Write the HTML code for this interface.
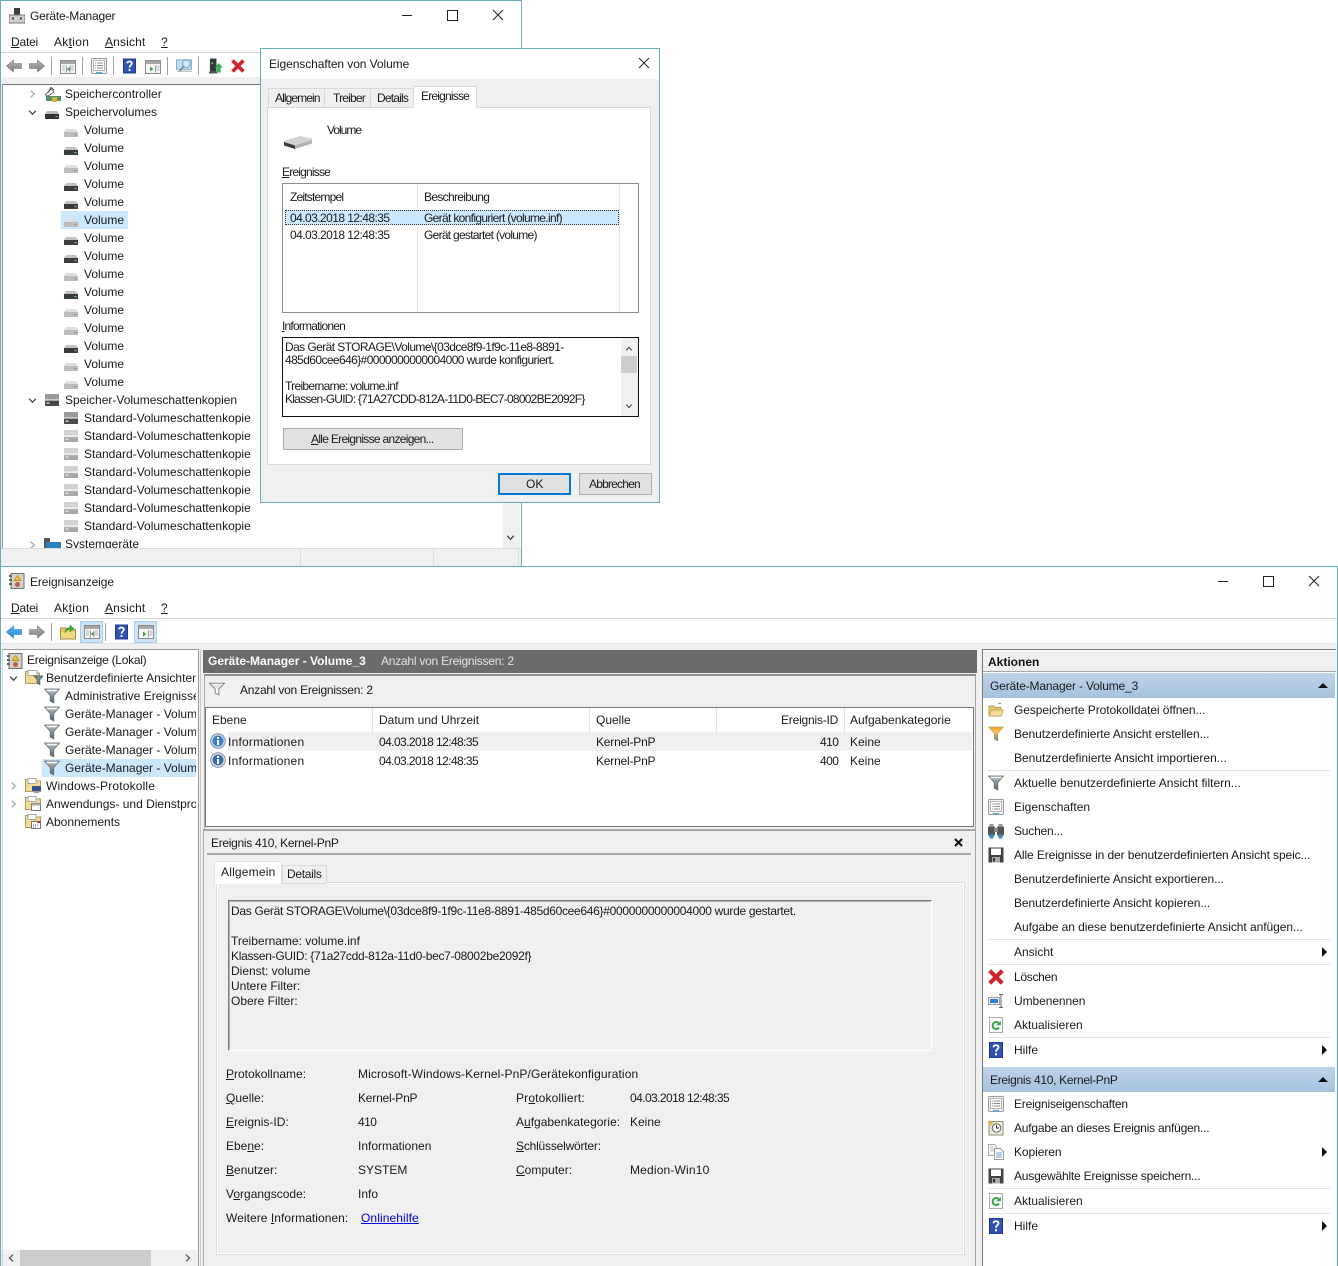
<!DOCTYPE html>
<html lang="de"><head><meta charset="utf-8"><title>Geräte-Manager und Ereignisanzeige</title>
<style>
html,body{margin:0;padding:0;background:#fff}
#r{position:relative;width:1338px;height:1266px;overflow:hidden;background:#fff;font:12px/14px "Liberation Sans",sans-serif;color:#1a1a1a}
#r div{position:absolute;box-sizing:border-box}
#r span,#r a{position:absolute;white-space:nowrap}
svg{position:absolute;overflow:visible}
.dlg span{letter-spacing:-.8px}
#r .d{letter-spacing:-.58px}
#r .a{letter-spacing:-.07px}
#r .b{letter-spacing:-.2px}
#r .c{letter-spacing:-.3px}
</style></head><body>
<svg width="0" height="0" style="position:absolute"><defs>
<linearGradient id="gg" x1="0" y1="0" x2="0" y2="1"><stop offset="0" stop-color="#b5b5b5"/><stop offset="1" stop-color="#7e7e7e"/></linearGradient>
<linearGradient id="gb" x1="0" y1="0" x2="0" y2="1"><stop offset="0" stop-color="#5cc1f0"/><stop offset="1" stop-color="#1c85cf"/></linearGradient>
<linearGradient id="fn" x1="0" y1="0" x2="0" y2="1"><stop offset="0" stop-color="#b8bec4"/><stop offset="1" stop-color="#59636b"/></linearGradient>
<linearGradient id="fo" x1="0" y1="0" x2="0" y2="1"><stop offset="0" stop-color="#f5a623"/><stop offset=".4" stop-color="#f6c15c"/><stop offset="1" stop-color="#6f7780"/></linearGradient>
<symbol id="back" viewBox="0 0 16 14"><path d="M.5 7 7.500 1V4.500H15.500V9.500H7.500V13Z" fill="url(#gg)" stroke="#777" stroke-width=".6"/></symbol>
<symbol id="fwd" viewBox="0 0 16 14"><path d="M15.500 7 8.500 1V4.500H.5V9.500H8.500V13Z" fill="url(#gg)" stroke="#777" stroke-width=".6"/></symbol>
<symbol id="backb" viewBox="0 0 16 14"><path d="M.5 7 7.500 1V4.500H15.500V9.500H7.500V13Z" fill="url(#gb)" stroke="#1a7fc4" stroke-width=".6"/></symbol>
<symbol id="pl" viewBox="0 0 16 14"><rect x=".5" y=".5" width="15" height="13" fill="#f7f7f7" stroke="#8b8b8b"/><rect x="1" y="1" width="14" height="3" fill="#a7a7a7"/><path d="M6.500 5.500V12.500M10 5.500V12.500" stroke="#999"/><path d="M9.500 7 6.800 9 9.500 11Z" fill="#3aa44d"/><path d="M2 6h3M2 8h3M2 10h3M11 6h3M11 8h3M11 10h3" stroke="#b5b5b5"/></symbol>
<symbol id="pr" viewBox="0 0 16 14"><rect x=".5" y=".5" width="15" height="13" fill="#f7f7f7" stroke="#8b8b8b"/><rect x="1" y="1" width="14" height="3" fill="#a7a7a7"/><path d="M10.500 5.500V12.500" stroke="#999"/><path d="M5 6.500 8.500 9 5 11.500Z" fill="#3aa44d"/><path d="M11.500 6h3M11.500 8h3M11.500 10h3" stroke="#b5b5b5"/></symbol>
<symbol id="prop" viewBox="0 0 16 16"><rect x=".5" y=".5" width="15" height="15" rx="1" fill="#f2f2f2" stroke="#9a9a9a"/><rect x="2.500" y="2.500" width="11" height="10" fill="#fff" stroke="#b5b5b5"/><path d="M4 5h1M6 5h6M4 7.500h1M6 7.500h6M4 10h1M6 10h6" stroke="#8a8a8a"/><path d="M5 14.800h6" stroke="#4aa4dd" stroke-width="1.400"/></symbol>
<symbol id="help" viewBox="0 0 14 16"><rect width="14" height="16" fill="#2f52b3"/><rect x=".5" y=".5" width="13" height="15" fill="none" stroke="#22398a"/><path d="M4.500 5.200C4.500 2.500 9.500 2.500 9.500 5.200 9.500 7.200 7 7.200 7 9.800" fill="none" stroke="#fff" stroke-width="1.900"/><rect x="6" y="11.300" width="2" height="2" fill="#fff"/></symbol>
<symbol id="mon" viewBox="0 0 18 16"><rect x=".5" y="1.500" width="16" height="10" fill="#bcdcf2" stroke="#8fa6b8"/><circle cx="11" cy="5.500" r="4" fill="#d5ecfa" stroke="#5f9fc9"/><path d="M8 8.500 3.500 14" stroke="#666" stroke-width="1.300"/><path d="M1 13.500H17" stroke="#9aa"/></symbol>
<symbol id="upd" viewBox="0 0 15 16"><rect x="1" y="0" width="7" height="14" fill="#33383a"/><rect x="2.500" y="4" width="2" height="2" fill="#4fc04f"/><path d="M0 14H9V16H0Z" fill="#555"/><path d="M10.500 5 15 9.500H12.500V15H8.500V9.500H6Z" fill="#2fb24f"/></symbol>
<symbol id="red" viewBox="0 0 15 15"><path d="M3 .5 7.500 5 12 .5 14.500 3 10 7.500 14.500 12 12 14.500 7.500 10 3 14.500 .5 12 5 7.500 .5 3Z" fill="#d4222a" stroke="#a9141b" stroke-width=".4"/></symbol>
<symbol id="devm" viewBox="0 0 16 16"><rect x="5" y="0" width="6" height="8" fill="#3b3b3b"/><rect x="0" y="7" width="16" height="8" fill="#cfcfcf" stroke="#777"/><rect x="3" y="9.500" width="2" height="2" fill="#444"/><rect x="11" y="9.500" width="2" height="2" fill="#444"/></symbol>
<symbol id="evt" viewBox="0 0 16 16"><rect x="2" y=".5" width="13" height="15" fill="#d8d2bd" stroke="#6f6f7f"/><rect x="0" y="2" width="3" height="2" fill="#567"/><rect x="0" y="6" width="3" height="2" fill="#567"/><rect x="0" y="10" width="3" height="2" fill="#567"/><path d="M8.500 2.500 12 7.500H5Z" fill="#f2c531" stroke="#7a5c00" stroke-width=".5"/><circle cx="8.500" cy="11.500" r="2.500" fill="#c25a5a"/></symbol>
<symbol id="dd" viewBox="0 0 14 8"><path d="M2 0H12L14 3H0Z" fill="#c2c2c2"/><rect y="3" width="14" height="5" fill="#3c3c3c"/><rect x="10.500" y="5" width="2" height="1.200" fill="#62d36b"/></symbol>
<symbol id="dl" viewBox="0 0 14 8"><path d="M2 0H12L14 3H0Z" fill="#dedede"/><rect y="3" width="14" height="5" fill="#bdbdbd"/><rect x="10.500" y="5" width="2" height="1.200" fill="#8a8a8a"/></symbol>
<symbol id="ds" viewBox="0 0 14 12"><rect y="0" width="14" height="5.500" fill="#d2d2d2"/><rect y="6.500" width="14" height="5.500" fill="#a8a8a8"/><rect y="6.500" width="14" height=".7" fill="#dcdcdc"/><rect x="1.500" y="8.500" width="3" height="1.200" fill="#eee"/></symbol>
<symbol id="dsd" viewBox="0 0 14 12"><rect y="0" width="14" height="5.500" fill="#9a9a9a"/><rect y="6.500" width="14" height="5.500" fill="#4a4a4a"/><rect x="1.500" y="8.500" width="3" height="1.200" fill="#dfe"/></symbol>
<symbol id="ctl" viewBox="0 0 16 16"><path d="M0 8 6 2 9 5 4 8.500Z" fill="#fff" stroke="#555" stroke-width=".8"/><path d="M3 5.500 6 .5 9 3" fill="none" stroke="#444"/><rect x="1" y="9" width="15" height="5" fill="#55906a"/><rect x="7" y="10" width="5" height="5" fill="#d8b238"/></symbol>
<symbol id="vgh" viewBox="0 0 14 8"><path d="M2 0H12L14 3H0Z" fill="#bcbcbc"/><rect y="3" width="14" height="5" fill="#333"/><rect x="10.500" y="5" width="2" height="1.200" fill="#62d36b"/></symbol>
<symbol id="sys" viewBox="0 0 17 15"><rect x="0" y="0" width="6" height="12" fill="#555"/><rect x="2" y="4" width="15" height="9" fill="#2d7fc4"/></symbol>
<symbol id="fu" viewBox="0 0 16 16"><path d="M.5 1H15.500L9.800 7.500V15L6.200 13V7.500Z" fill="url(#fn)" stroke="#5f6a72" stroke-width=".7"/><path d="M2.300 1.800H13.700L12.600 3.200H3.500Z" fill="#fff"/></symbol>
<symbol id="fuw" viewBox="0 0 18 15"><path d="M.5 1H17.500L11 7.500V14L7 12V7.500Z" fill="#fff" stroke="#777"/><path d="M3 2.500H15L10.500 7H7.500Z" fill="#e2e2e2"/></symbol>
<symbol id="fuo" viewBox="0 0 16 16"><path d="M.5 1H15.500L9.800 7.500V15L6.200 13V7.500Z" fill="url(#fo)" stroke="#8a8a6a" stroke-width=".5"/></symbol>
<symbol id="folf" viewBox="0 0 18 16"><path d="M.5 14.500V2.500H6L7.500 4H14.500V14.500Z" fill="#f3dc92" stroke="#b2986a"/><rect x="3" y="1.500" width="9" height="5" fill="#fff" stroke="#aaa"/><path d="M9 7H18L14.800 10.500V15.500L12.200 14V10.500Z" fill="#7f8b95" stroke="#566"/></symbol>
<symbol id="folw" viewBox="0 0 16 16"><path d="M.5 14.500V2.500H6L7.500 4H15.500V14.500Z" fill="#f3dc92" stroke="#b2986a"/><rect x="3" y="1.500" width="8" height="5" fill="#fff" stroke="#aaa"/><rect x="7" y="9" width="9" height="5" fill="#31528e"/><rect x="9" y="14" width="5" height="2" fill="#999"/></symbol>
<symbol id="fola" viewBox="0 0 16 16"><path d="M.5 14.500V2.500H6L7.500 4H15.500V14.500Z" fill="#f3dc92" stroke="#b2986a"/><rect x="3" y="1.500" width="8" height="5" fill="#fff" stroke="#aaa"/><rect x="6.500" y="8.500" width="9" height="7" fill="#fff" stroke="#777"/><rect x="6.500" y="8.500" width="9" height="2" fill="#aaa"/></symbol>
<symbol id="folb" viewBox="0 0 16 16"><path d="M.5 14.500V2.500H6L7.500 4H15.500V14.500Z" fill="#f3dc92" stroke="#b2986a"/><rect x="3" y="1.500" width="8" height="5" fill="#fff" stroke="#aaa"/><rect x="6.500" y="8.500" width="9" height="7" fill="#fff" stroke="#777"/><path d="M8 12h1M10 12h1M12 12h1M8 14h1M10 14h1" stroke="#46a"/><rect x="12" y="8" width="3" height="2" fill="#d33"/></symbol>
<symbol id="folu" viewBox="0 0 16 16"><path d="M.5 15V4H6L7.500 5.500H15.500V15Z" fill="#e5c85f" stroke="#a58c3f"/><path d="M1 8H15V14.500H1Z" fill="#f3d97e"/><path d="M5 9C5 5 7 3.500 10 3.500V1L14 4.500 10 8V5.500C8 5.500 6.500 6.500 5 9Z" fill="#3fae4a" stroke="#237a2d" stroke-width=".4"/></symbol>
<symbol id="open" viewBox="0 0 16 16"><path d="M1 4H6L7 5.500H13V14H1Z" fill="#e8c86c" stroke="#a58c3f" stroke-width=".7"/><path d="M3.500 8H15.500L13 14H1Z" fill="#f4dd98" stroke="#b79f55" stroke-width=".7"/><path d="M10 1.500h3" stroke="#6ab56a"/></symbol>
<symbol id="bin" viewBox="0 0 16 16"><rect x="0" y="3" width="7" height="10" rx="2" fill="#555"/><rect x="9" y="3" width="7" height="10" rx="2" fill="#555"/><rect x="6" y="5" width="4" height="4" fill="#888"/><rect x="1.500" y="1" width="4" height="3" fill="#999"/><rect x="10.500" y="1" width="4" height="3" fill="#999"/><circle cx="3.500" cy="13.500" r="2.300" fill="#3d8fc9"/><circle cx="12.500" cy="13.500" r="2.300" fill="#3d8fc9"/></symbol>
<symbol id="sav" viewBox="0 0 16 16"><path d="M.5.500H15.500V15.500H.5Z" fill="#3f4347"/><rect x="3" y="1.500" width="10" height="6.500" fill="#fff"/><rect x="4" y="10" width="8" height="5.500" fill="#a9a9a9"/><rect x="5" y="11" width="2" height="3.500" fill="#333"/></symbol>
<symbol id="ren" viewBox="0 0 16 14"><rect x=".5" y="3.500" width="11" height="7" fill="#eef" stroke="#999"/><rect x="2" y="5" width="8" height="4" fill="#2f7fd4"/><path d="M11 .5H15M13 .5V13.500M11 13.500H15" stroke="#666" fill="none"/></symbol>
<symbol id="rf" viewBox="0 0 16 16"><rect x=".5" y=".5" width="13" height="15" fill="#f8f8f8" stroke="#aaa"/><path d="M10 6.500A3.500 3.500 0 1 0 10 10.500" fill="none" stroke="#36a94a" stroke-width="2"/><path d="M11.800 3.800V8.300H7.300Z" fill="#36a94a"/></symbol>
<symbol id="task" viewBox="0 0 16 16"><rect x="1" y="1.500" width="14" height="13.500" fill="#efe9d6" stroke="#8d8d80"/><circle cx="8.500" cy="8" r="4.300" fill="#fff" stroke="#666"/><path d="M8.500 5V8H11" fill="none" stroke="#333"/><path d="M3 0 4 2 6 3 4 4 3 6 2 4 0 3 2 2Z" fill="#f3b52c"/></symbol>
<symbol id="cop" viewBox="0 0 16 16"><path d="M.5.500H6.500L8.500 2.500V11.500H.5Z" fill="#f8f8f8" stroke="#aaa"/><path d="M6.500 4.500H12.500L15.500 7.500V15.500H6.500Z" fill="#fff" stroke="#999"/><path d="M8 9h6M8 11h6M8 13h6" stroke="#6a9fd0"/><path d="M2 3h3M2 5h4M2 7h4" stroke="#bbb"/></symbol>
<symbol id="inf" viewBox="0 0 16 16"><circle cx="8" cy="8" r="7.300" fill="#cfe0f3" stroke="#7c8da4"/><circle cx="8" cy="8" r="5.500" fill="#3e7fc8"/><rect x="7" y="7" width="2" height="5" fill="#fff"/><rect x="7" y="4" width="2" height="2" fill="#fff"/></symbol>
<symbol id="ina" viewBox="0 0 16 16"><circle cx="8" cy="8" r="7.300" fill="#ececec" stroke="#7c8da4"/><circle cx="8" cy="8" r="5.500" fill="#3c6eb0"/><rect x="7" y="7" width="2" height="5" fill="#fff"/><rect x="7" y="4" width="2" height="2" fill="#fff"/></symbol>
<symbol id="ch" viewBox="0 0 8 6"><path d="M.7 .7 4 4.300 7.300 .7" fill="none" stroke="#444" stroke-width="1.300"/></symbol>
<symbol id="cr" viewBox="0 0 6 8"><path d="M.7 .7 4.300 4 .7 7.300" fill="none" stroke="#a6a6a6" stroke-width="1.300"/></symbol>
</defs></svg>

<div id="r">

<!-- WINDOW 1 -->
<div style="left:0;top:0;width:522px;height:567px;background:#fff;border:1px solid #67adba;overflow:hidden"></div>
<svg style="left:9px;top:8px" width="16" height="16"><use href="#devm"/></svg>
<span class="b" style="left:30px;top:9px">Geräte-Manager</span>
<svg style="left:402px;top:10px" width="110" height="12"><path d="M0 5.500H10M45.500 .500H55.500V10.500H45.500ZM91 0 101 10M101 0 91 10" fill="none" stroke="#222"/></svg>
<span style="left:11px;top:35px;letter-spacing:-.2px"><u>D</u>atei</span><span style="left:54px;top:35px;letter-spacing:.3px">Ak<u>t</u>ion</span><span style="left:105px;top:35px;letter-spacing:.15px"><u>A</u>nsicht</span><span style="left:161px;top:35px"><u>?</u></span>
<div style="left:1px;top:52px;width:520px;height:1px;background:#d5d5d5"></div>
<svg style="left:6px;top:59px" width="16" height="14"><use href="#back"/></svg>
<svg style="left:29px;top:59px" width="16" height="14"><use href="#fwd"/></svg>
<div style="left:51px;top:57px;width:1px;height:18px;background:#a0a0a0"></div>
<svg style="left:60px;top:60px" width="16" height="14"><use href="#pl"/></svg>
<div style="left:82px;top:57px;width:1px;height:18px;background:#a0a0a0"></div>
<svg style="left:91px;top:58px" width="16" height="16"><use href="#prop"/></svg>
<div style="left:113px;top:57px;width:1px;height:18px;background:#a0a0a0"></div>
<svg style="left:123px;top:58px" width="13" height="16"><use href="#help"/></svg>
<svg style="left:145px;top:60px" width="16" height="14"><use href="#pr"/></svg>
<div style="left:167px;top:57px;width:1px;height:18px;background:#a0a0a0"></div>
<svg style="left:176px;top:58px" width="17" height="16"><use href="#mon"/></svg>
<div style="left:198px;top:57px;width:1px;height:18px;background:#a0a0a0"></div>
<svg style="left:209px;top:58px" width="14" height="16"><use href="#upd"/></svg>
<svg style="left:231px;top:59px" width="14" height="14"><use href="#red"/></svg>
<div style="left:1px;top:77px;width:520px;height:7px;background:#f0f0f0"></div>
<div style="left:1px;top:84px;width:2px;height:464px;background:#f0f0f0"></div>
<div style="left:2px;top:84px;width:519px;height:1px;background:#777"></div>
<div style="left:2px;top:84px;width:1px;height:464px;background:#999"></div>
<div style="left:503px;top:85px;width:17px;height:463px;background:#f0f0f0"></div>
<svg style="left:506px;top:535px" width="9" height="6"><use href="#ch"/></svg>

<div style="left:61px;top:211px;width:67px;height:18px;background:#cce8ff"></div>
<svg style="left:30px;top:90px" width="6" height="8"><use href="#cr"/></svg>
<svg style="left:45px;top:87px" width="16" height="16"><use href="#ctl"/></svg><span style="left:65px;top:87px">Speichercontroller</span>
<svg style="left:28px;top:110px" width="9" height="6"><use href="#ch"/></svg>
<svg style="left:45px;top:111px" width="14" height="8"><use href="#vgh"/></svg><span style="left:65px;top:105px">Speichervolumes</span>
<svg style="left:64px;top:129px" width="14" height="8"><use href="#dl"/></svg><span style="left:84px;top:123px">Volume</span>
<svg style="left:64px;top:147px" width="14" height="8"><use href="#dd"/></svg><span style="left:84px;top:141px">Volume</span>
<svg style="left:64px;top:165px" width="14" height="8"><use href="#dl"/></svg><span style="left:84px;top:159px">Volume</span>
<svg style="left:64px;top:183px" width="14" height="8"><use href="#dd"/></svg><span style="left:84px;top:177px">Volume</span>
<svg style="left:64px;top:201px" width="14" height="8"><use href="#dd"/></svg><span style="left:84px;top:195px">Volume</span>
<svg style="left:64px;top:219px" width="14" height="8"><use href="#dl"/></svg><span style="left:84px;top:213px">Volume</span>
<svg style="left:64px;top:237px" width="14" height="8"><use href="#dd"/></svg><span style="left:84px;top:231px">Volume</span>
<svg style="left:64px;top:255px" width="14" height="8"><use href="#dd"/></svg><span style="left:84px;top:249px">Volume</span>
<svg style="left:64px;top:273px" width="14" height="8"><use href="#dl"/></svg><span style="left:84px;top:267px">Volume</span>
<svg style="left:64px;top:291px" width="14" height="8"><use href="#dd"/></svg><span style="left:84px;top:285px">Volume</span>
<svg style="left:64px;top:309px" width="14" height="8"><use href="#dl"/></svg><span style="left:84px;top:303px">Volume</span>
<svg style="left:64px;top:327px" width="14" height="8"><use href="#dl"/></svg><span style="left:84px;top:321px">Volume</span>
<svg style="left:64px;top:345px" width="14" height="8"><use href="#dd"/></svg><span style="left:84px;top:339px">Volume</span>
<svg style="left:64px;top:363px" width="14" height="8"><use href="#dl"/></svg><span style="left:84px;top:357px">Volume</span>
<svg style="left:64px;top:381px" width="14" height="8"><use href="#dl"/></svg><span style="left:84px;top:375px">Volume</span>
<svg style="left:28px;top:398px" width="9" height="6"><use href="#ch"/></svg>
<svg style="left:45px;top:394px" width="14" height="12"><use href="#dsd"/></svg><span style="left:65px;top:393px">Speicher-Volumeschattenkopien</span>
<svg style="left:64px;top:412px" width="14" height="12"><use href="#dsd"/></svg><span style="left:84px;top:411px">Standard-Volumeschattenkopie</span>
<svg style="left:64px;top:430px" width="14" height="12"><use href="#ds"/></svg><span style="left:84px;top:429px">Standard-Volumeschattenkopie</span>
<svg style="left:64px;top:448px" width="14" height="12"><use href="#ds"/></svg><span style="left:84px;top:447px">Standard-Volumeschattenkopie</span>
<svg style="left:64px;top:466px" width="14" height="12"><use href="#ds"/></svg><span style="left:84px;top:465px">Standard-Volumeschattenkopie</span>
<svg style="left:64px;top:484px" width="14" height="12"><use href="#ds"/></svg><span style="left:84px;top:483px">Standard-Volumeschattenkopie</span>
<svg style="left:64px;top:502px" width="14" height="12"><use href="#ds"/></svg><span style="left:84px;top:501px">Standard-Volumeschattenkopie</span>
<svg style="left:64px;top:520px" width="14" height="12"><use href="#ds"/></svg><span style="left:84px;top:519px">Standard-Volumeschattenkopie</span>
<svg style="left:30px;top:541px" width="6" height="8"><use href="#cr"/></svg>
<svg style="left:44px;top:538px" width="17" height="15"><use href="#sys"/></svg><span style="left:65px;top:537px">Systemgeräte</span>
<div style="left:1px;top:548px;width:520px;height:18px;background:#f0f0f0;border-top:1px solid #dcdcdc"></div>
<div style="left:300px;top:549px;width:1px;height:17px;background:#dcdcdc"></div>
<div style="left:433px;top:549px;width:1px;height:17px;background:#dcdcdc"></div>
<div style="left:518px;top:549px;width:1px;height:17px;background:#dcdcdc"></div>

<!-- DIALOG -->
<div style="left:260px;top:48px;width:400px;height:455px;background:#f0f0f0;border:1px solid #67adba"></div>
<div style="left:261px;top:49px;width:398px;height:30px;background:#fff"></div>
<span style="left:269px;top:57px;letter-spacing:-.08px">Eigenschaften von Volume</span>
<svg style="left:639px;top:58px" width="10" height="10"><path d="M0 0 10 10M10 0 0 10" stroke="#222"/></svg>
<div style="left:267px;top:107px;width:384px;height:358px;background:#fff;border:1px solid #d9d9d9"></div>
<div style="left:268px;top:88px;width:57px;height:20px;background:#f0f0f0;border:1px solid #d9d9d9"></div>
<div style="left:325px;top:88px;width:46px;height:20px;background:#f0f0f0;border:1px solid #d9d9d9;border-left:0"></div>
<div style="left:371px;top:88px;width:43px;height:20px;background:#f0f0f0;border:1px solid #d9d9d9;border-left:0"></div>
<div style="left:413px;top:86px;width:64px;height:22px;background:#fff;border:1px solid #d9d9d9;border-bottom:0"></div>
<div class="dlg">
<span style="left:275px;top:91px;letter-spacing:-.9px">Allgemein</span><span style="left:333px;top:91px">Treiber</span><span style="left:377px;top:91px">Details</span><span style="left:421px;top:89px">Ereignisse</span>
<span style="left:327px;top:123px;letter-spacing:-1px">Volume</span>
<span style="left:282px;top:165px"><u>E</u>reignisse</span>
<span style="left:282px;top:319px"><u>I</u>nformationen</span>
</div>
<svg style="left:283px;top:133px" width="30" height="18"><path d="M1 8 17 3 29 5.500 29 10 12 16 1 12Z" fill="#d4d4d4"/><path d="M1 9 12 12.500V16L1 12.500Z" fill="#3d3d3d"/><path d="M12 12.500 29 7V10.500L12 16Z" fill="#b3b3b3"/></svg>
<div style="left:282px;top:183px;width:357px;height:130px;background:#fff;border:1px solid #8d8d8d"></div>
<div style="left:417px;top:184px;width:1px;height:128px;background:#e8e8e8"></div>
<div style="left:619px;top:184px;width:1px;height:128px;background:#e8e8e8"></div>
<div style="left:285px;top:210px;width:334px;height:15px;background:#cce8ff;border:1px dotted #333"></div>
<div class="dlg">
<span style="left:290px;top:190px">Zeitstempel</span><span style="left:424px;top:190px;letter-spacing:-.68px">Beschreibung</span>
<span style="left:290px;top:211px;letter-spacing:-.56px">04.03.2018 12:48:35</span><span style="left:424px;top:211px;letter-spacing:-.67px">Gerät konfiguriert (volume.inf)</span>
<span style="left:290px;top:228px;letter-spacing:-.56px">04.03.2018 12:48:35</span><span style="left:424px;top:228px;letter-spacing:-.72px">Gerät gestartet (volume)</span>
</div>
<div style="left:282px;top:337px;width:357px;height:80px;background:#fff;border:1px solid #111"></div>
<div style="left:621px;top:338px;width:17px;height:78px;background:#f0f0f0"></div>
<div style="left:621px;top:356px;width:16px;height:17px;background:#cdcdcd"></div>
<svg style="left:625px;top:346px" width="8" height="5"><g transform="matrix(1 0 0 -1 0 5)"><use href="#ch" width="8" height="5"/></g></svg>
<svg style="left:625px;top:404px" width="8" height="5"><use href="#ch" width="8" height="5"/></svg>
<div class="dlg">
<span style="left:285px;top:340px;letter-spacing:-.58px">Das Gerät STORAGE\Volume\{03dce8f9-1f9c-11e8-8891-</span>
<span style="left:285px;top:353px;letter-spacing:-.6px">485d60cee646}#0000000000004000 wurde konfiguriert.</span>
<span style="left:285px;top:379px;letter-spacing:-.7px">Treibername: volume.inf</span>
<span style="left:285px;top:392px;letter-spacing:-.75px">Klassen-GUID: {71A27CDD-812A-11D0-BEC7-08002BE2092F}</span>
</div>
<div style="left:283px;top:428px;width:180px;height:22px;background:#e1e1e1;border:1px solid #adadad"></div>
<div style="left:498px;top:473px;width:73px;height:22px;background:#e1e1e1;border:2px solid #0078d7"></div>
<div style="left:579px;top:473px;width:73px;height:22px;background:#e1e1e1;border:1px solid #adadad"></div>
<div class="dlg">
<span style="left:311px;top:432px;letter-spacing:-.7px"><u>A</u>lle Ereignisse anzeigen...</span>
<span style="left:526px;top:477px;letter-spacing:0">OK</span>
<span style="left:589px;top:477px">Abbrechen</span>
</div>

<!-- WINDOW 2 -->
<div style="left:0;top:566px;width:1338px;height:700px;background:#fff;border:1px solid #67adba;border-bottom:0"></div>
<svg style="left:9px;top:573px" width="16" height="16"><use href="#evt"/></svg>
<span style="left:30px;top:575px;letter-spacing:-.1px">Ereignisanzeige</span>
<svg style="left:1218px;top:576px" width="110" height="12"><path d="M0 5.500H10M45.500 .500H55.500V10.500H45.500ZM91 0 101 10M101 0 91 10" fill="none" stroke="#222"/></svg>
<span style="left:11px;top:601px;letter-spacing:-.2px"><u>D</u>atei</span><span style="left:54px;top:601px;letter-spacing:.3px">Ak<u>t</u>ion</span><span style="left:105px;top:601px;letter-spacing:.15px"><u>A</u>nsicht</span><span style="left:161px;top:601px"><u>?</u></span>
<div style="left:1px;top:618px;width:1336px;height:1px;background:#d5d5d5"></div>
<svg style="left:6px;top:625px" width="16" height="14"><use href="#backb"/></svg>
<svg style="left:29px;top:625px" width="16" height="14"><use href="#fwd"/></svg>
<div style="left:51px;top:623px;width:1px;height:18px;background:#a0a0a0"></div>
<svg style="left:60px;top:624px" width="16" height="16"><use href="#folu"/></svg>
<div style="left:80px;top:621px;width:23px;height:22px;background:#cce4f7;border:1px solid #a6cfee"></div>
<svg style="left:84px;top:625px" width="16" height="14"><use href="#pl"/></svg>
<div style="left:105px;top:623px;width:1px;height:18px;background:#a0a0a0"></div>
<svg style="left:115px;top:624px" width="13" height="16"><use href="#help"/></svg>
<div style="left:134px;top:621px;width:23px;height:22px;background:#cce4f7;border:1px solid #a6cfee"></div>
<svg style="left:138px;top:625px" width="16" height="14"><use href="#pr"/></svg>
<div style="left:1px;top:643px;width:1336px;height:623px;background:#f0f0f0;border-top:1px solid #e3e3e3"></div>

<!-- left tree -->
<div style="left:2px;top:649px;width:197px;height:617px;background:#fff;border:1px solid #9a9a9a;border-left-color:#d8d8d8;border-bottom:0;overflow:hidden">
<div style="left:39px;top:109px;width:155px;height:18px;background:#cce8ff"></div>
<svg style="left:4px;top:3px" width="16" height="16"><use href="#evt"/></svg><span style="left:24px;top:3px;letter-spacing:-.26px">Ereignisanzeige (Lokal)</span>
<svg style="left:6px;top:26px" width="9" height="6"><use href="#ch"/></svg>
<svg style="left:22px;top:19px" width="18" height="16"><use href="#folf"/></svg><span style="left:43px;top:21px">Benutzerdefinierte Ansichten</span>
<svg style="left:41px;top:38px" width="16" height="16"><use href="#fu"/></svg><span style="left:62px;top:39px">Administrative Ereignisse</span>
<svg style="left:41px;top:56px" width="16" height="16"><use href="#fu"/></svg><span style="left:62px;top:57px">Geräte-Manager - Volume_0</span>
<svg style="left:41px;top:74px" width="16" height="16"><use href="#fu"/></svg><span style="left:62px;top:75px">Geräte-Manager - Volume_1</span>
<svg style="left:41px;top:92px" width="16" height="16"><use href="#fu"/></svg><span style="left:62px;top:93px">Geräte-Manager - Volume_2</span>
<svg style="left:41px;top:110px" width="16" height="16"><use href="#fu"/></svg><span style="left:62px;top:111px">Geräte-Manager - Volume_3</span>
<svg style="left:8px;top:132px" width="6" height="8"><use href="#cr"/></svg>
<svg style="left:22px;top:127px" width="16" height="16"><use href="#folw"/></svg><span style="left:43px;top:129px;letter-spacing:.17px">Windows-Protokolle</span>
<svg style="left:8px;top:150px" width="6" height="8"><use href="#cr"/></svg>
<svg style="left:22px;top:145px" width="16" height="16"><use href="#fola"/></svg><span style="left:43px;top:147px">Anwendungs- und Dienstprotokolle</span>
<svg style="left:22px;top:163px" width="16" height="16"><use href="#folb"/></svg><span style="left:43px;top:165px">Abonnements</span>
<div style="left:193px;top:0;width:3px;height:600px;background:#fff"></div>
<div style="left:0;top:600px;width:195px;height:16px;background:#f0f0f0"></div>
<div style="left:17px;top:600px;width:131px;height:16px;background:#cdcdcd"></div>
<svg style="left:5px;top:604px" width="6" height="8"><g stroke="#555" stroke-width="1.300" fill="none"><path d="M5 .7 1.500 4 5 7.300"/></g></svg>
<svg style="left:182px;top:604px" width="6" height="8"><g stroke="#555" stroke-width="1.300" fill="none"><path d="M1 .7 4.500 4 1 7.300"/></g></svg>
</div>
<div style="left:200px;top:650px;width:1px;height:616px;background:#c8c8c8"></div>

<!-- center -->
<div style="left:203px;top:650px;width:774px;height:23px;background:#6b6b6b"></div>
<span style="left:208px;top:654px;color:#fff;font-weight:bold">Geräte-Manager - Volume_3</span>
<span style="left:381px;top:654px;color:#e4e4e4;letter-spacing:-.24px">Anzahl von Ereignissen: 2</span>
<div style="left:204px;top:674px;width:772px;height:592px;border:1px solid #a6a6a6;border-bottom:0"></div>
<div style="left:204px;top:674px;width:772px;height:2px;background:#8f8f8f"></div>
<svg style="left:209px;top:682px" width="16" height="14"><use href="#fuw"/></svg>
<span style="left:240px;top:683px;letter-spacing:-.24px">Anzahl von Ereignissen: 2</span>
<div style="left:205px;top:707px;width:769px;height:120px;background:#fff;border:1px solid #787878"></div>
<div style="left:228px;top:732px;width:744px;height:19px;background:#f0f0f0"></div>
<div style="left:372px;top:708px;width:1px;height:24px;background:#e5e5e5"></div>
<div style="left:589px;top:708px;width:1px;height:24px;background:#e5e5e5"></div>
<div style="left:716px;top:708px;width:1px;height:24px;background:#e5e5e5"></div>
<div style="left:844px;top:708px;width:1px;height:24px;background:#e5e5e5"></div>
<span style="left:212px;top:713px">Ebene</span><span style="left:379px;top:713px">Datum und Uhrzeit</span><span style="left:596px;top:713px">Quelle</span><span class="b" style="left:781px;top:713px">Ereignis-ID</span><span style="left:850px;top:713px">Aufgabenkategorie</span>
<svg style="left:210px;top:733px" width="16" height="16"><use href="#inf"/></svg>
<svg style="left:210px;top:752px" width="16" height="16"><use href="#ina"/></svg>
<span style="left:228px;top:735px;letter-spacing:.23px">Informationen</span><span class="d" style="left:379px;top:735px">04.03.2018 12:48:35</span><span class="b" style="left:596px;top:735px">Kernel-PnP</span><span class="d" style="left:820px;top:735px">410</span><span style="left:850px;top:735px">Keine</span>
<span style="left:228px;top:754px;letter-spacing:.23px">Informationen</span><span class="d" style="left:379px;top:754px">04.03.2018 12:48:35</span><span class="b" style="left:596px;top:754px">Kernel-PnP</span><span class="d" style="left:820px;top:754px">400</span><span style="left:850px;top:754px">Keine</span>

<div style="left:203px;top:829px;width:773px;height:437px;background:#f0f0f0;border:1px solid #a6a6a6;border-top:2px solid #a6a6a6;border-bottom:0"></div>
<span class="c" style="left:211px;top:836px">Ereignis 410, Kernel-PnP</span>
<svg style="left:954px;top:838px" width="9" height="9"><path d="M1 1 8 8M8 1 1 8" stroke="#111" stroke-width="2"/></svg>
<div style="left:207px;top:853px;width:764px;height:2px;background:#a9a9a9"></div>
<div style="left:217px;top:883px;width:747px;height:371px;background:#f0f0f0;border:1px solid #fff;outline:1px solid #dfdfdf"></div>
<div style="left:282px;top:865px;width:45px;height:19px;background:#f0f0f0;border:1px solid #d9d9d9"></div>
<div style="left:214px;top:861px;width:68px;height:23px;background:#fff;border:1px solid #e3e3e3;border-bottom:0"></div>
<span style="left:221px;top:865px;letter-spacing:.2px">Allgemein</span><span class="c" style="left:287px;top:867px">Details</span>
<div style="left:228px;top:900px;width:704px;height:151px;border-top:1px solid #7d7d7d;border-left:1px solid #7d7d7d;border-right:1px solid #fff;border-bottom:1px solid #fff;box-shadow:inset 1px 1px 0 #b4b4b4"></div>
<span class="c" style="left:231px;top:904px">Das Gerät STORAGE\Volume\{03dce8f9-1f9c-11e8-8891-485d60cee646}#0000000000004000 wurde gestartet.</span>
<span style="left:231px;top:934px">Treibername: volume.inf</span>
<span style="left:231px;top:949px;letter-spacing:-.29px">Klassen-GUID: {71a27cdd-812a-11d0-bec7-08002be2092f}</span>
<span style="left:231px;top:964px">Dienst: volume</span>
<span style="left:231px;top:979px">Untere Filter:</span>
<span style="left:231px;top:994px">Obere Filter:</span>
<span style="left:226px;top:1067px"><u>P</u>rotokollname:</span><span style="left:358px;top:1067px;letter-spacing:.1px">Microsoft-Windows-Kernel-PnP/Gerätekonfiguration</span>
<span style="left:226px;top:1091px"><u>Q</u>uelle:</span><span class="b" style="left:358px;top:1091px">Kernel-PnP</span><span style="left:516px;top:1091px;letter-spacing:.15px">Pr<u>o</u>tokolliert:</span><span class="d" style="left:630px;top:1091px">04.03.2018 12:48:35</span>
<span style="left:226px;top:1115px"><u>E</u>reignis-ID:</span><span class="d" style="left:358px;top:1115px">410</span><span style="left:516px;top:1115px"><span style="position:static">A<u>u</u>fgabenkategorie:</span></span><span style="left:630px;top:1115px">Keine</span>
<span style="left:226px;top:1139px">Ebe<u>n</u>e:</span><span style="left:358px;top:1139px">Informationen</span><span class="b" style="left:516px;top:1139px"><u>S</u>chlüsselwörter:</span>
<span style="left:226px;top:1163px"><u>B</u>enutzer:</span><span style="left:358px;top:1163px">SYSTEM</span><span style="left:516px;top:1163px"><u>C</u>omputer:</span><span style="left:630px;top:1163px;letter-spacing:.17px">Medion-Win10</span>
<span style="left:226px;top:1187px">V<u>o</u>rgangscode:</span><span style="left:358px;top:1187px">Info</span>
<span style="left:226px;top:1211px;letter-spacing:.05px">Weitere <u>I</u>nformationen:</span><span style="left:361px;top:1211px;color:#0000e0;text-decoration:underline;letter-spacing:.1px">Onlinehilfe</span>

<!-- right -->
<div style="left:982px;top:649px;width:354px;height:617px;background:#fff;border-left:1px solid #777;border-top:1px solid #777"></div>
<div style="left:983px;top:651px;width:353px;height:20px;background:#f0f0f0"></div>
<div style="left:983px;top:671px;width:353px;height:1px;background:#a6a6a6"></div>
<span style="left:988px;top:655px;font-weight:bold;color:#111">Aktionen</span>
<div style="left:983px;top:673px;width:352px;height:25px;background:linear-gradient(#bed3e8,#a6c2dd)"></div>
<span style="left:990px;top:679px;letter-spacing:-.16px">Geräte-Manager - Volume_3</span>
<svg style="left:1318px;top:683px" width="10" height="5"><path d="M5 0 10 5H0Z" fill="#111"/></svg>
<div style="left:983px;top:1067px;width:352px;height:25px;background:linear-gradient(#bed3e8,#a6c2dd)"></div>
<span class="c" style="left:990px;top:1073px">Ereignis 410, Kernel-PnP</span>
<svg style="left:1318px;top:1077px" width="10" height="5"><path d="M5 0 10 5H0Z" fill="#111"/></svg>
<div style="left:988px;top:770px;width:342px;height:1px;background:#e3e3e3"></div>
<div style="left:988px;top:939px;width:342px;height:1px;background:#e3e3e3"></div>
<div style="left:988px;top:964px;width:342px;height:1px;background:#e3e3e3"></div>
<div style="left:988px;top:1037px;width:342px;height:1px;background:#e3e3e3"></div>
<div style="left:988px;top:1188px;width:342px;height:1px;background:#e3e3e3"></div>
<div style="left:988px;top:1213px;width:342px;height:1px;background:#e3e3e3"></div>

<svg style="left:988px;top:702px" width="16" height="16"><use href="#open"/></svg><span class="a" style="left:1014px;top:703px">Gespeicherte Protokolldatei öffnen...</span>
<svg style="left:988px;top:726px" width="16" height="16"><use href="#fuo"/></svg><span class="a" style="left:1014px;top:727px">Benutzerdefinierte Ansicht erstellen...</span>
<span style="left:1014px;top:751px">Benutzerdefinierte Ansicht importieren...</span>
<svg style="left:988px;top:775px" width="16" height="16"><use href="#fu"/></svg><span style="left:1014px;top:776px">Aktuelle benutzerdefinierte Ansicht filtern...</span>
<svg style="left:988px;top:799px" width="16" height="16"><use href="#prop"/></svg><span style="left:1014px;top:800px">Eigenschaften</span>
<svg style="left:988px;top:823px" width="16" height="16"><use href="#bin"/></svg><span class="b" style="left:1014px;top:824px">Suchen...</span>
<svg style="left:988px;top:847px" width="16" height="16"><use href="#sav"/></svg><span style="left:1014px;top:848px;letter-spacing:-.1px">Alle Ereignisse in der benutzerdefinierten Ansicht speic...</span>
<span class="a" style="left:1014px;top:872px">Benutzerdefinierte Ansicht exportieren...</span>
<span class="a" style="left:1014px;top:896px">Benutzerdefinierte Ansicht kopieren...</span>
<span style="left:1014px;top:920px;letter-spacing:-.05px">Aufgabe an diese benutzerdefinierte Ansicht anfügen...</span>
<span style="left:1014px;top:945px">Ansicht</span>
<svg style="left:1322px;top:947px" width="5" height="10"><path d="M0 0 5 5 0 10Z" fill="#111"/></svg>
<svg style="left:988px;top:969px" width="16" height="16"><use href="#red"/></svg><span class="c" style="left:1014px;top:970px">Löschen</span>
<svg style="left:988px;top:994px" width="16" height="14"><use href="#ren"/></svg><span class="a" style="left:1014px;top:994px">Umbenennen</span>
<svg style="left:989px;top:1017px" width="16" height="16"><use href="#rf"/></svg><span style="left:1014px;top:1018px">Aktualisieren</span>
<svg style="left:989px;top:1042px" width="14" height="16"><use href="#help"/></svg><span style="left:1014px;top:1043px">Hilfe</span>
<svg style="left:1322px;top:1045px" width="5" height="10"><path d="M0 0 5 5 0 10Z" fill="#111"/></svg>
<svg style="left:988px;top:1096px" width="16" height="16"><use href="#prop"/></svg><span class="b" style="left:1014px;top:1097px">Ereigniseigenschaften</span>
<svg style="left:988px;top:1120px" width="16" height="16"><use href="#task"/></svg><span class="b" style="left:1014px;top:1121px">Aufgabe an dieses Ereignis anfügen...</span>
<svg style="left:988px;top:1144px" width="16" height="16"><use href="#cop"/></svg><span class="a" style="left:1014px;top:1145px">Kopieren</span>
<svg style="left:1322px;top:1147px" width="5" height="10"><path d="M0 0 5 5 0 10Z" fill="#111"/></svg>
<svg style="left:988px;top:1168px" width="16" height="16"><use href="#sav"/></svg><span class="b" style="left:1014px;top:1169px">Ausgewählte Ereignisse speichern...</span>
<svg style="left:989px;top:1193px" width="16" height="16"><use href="#rf"/></svg><span style="left:1014px;top:1194px">Aktualisieren</span>
<svg style="left:989px;top:1218px" width="14" height="16"><use href="#help"/></svg><span style="left:1014px;top:1219px">Hilfe</span>
<svg style="left:1322px;top:1221px" width="5" height="10"><path d="M0 0 5 5 0 10Z" fill="#111"/></svg>
</div>
</body></html>
